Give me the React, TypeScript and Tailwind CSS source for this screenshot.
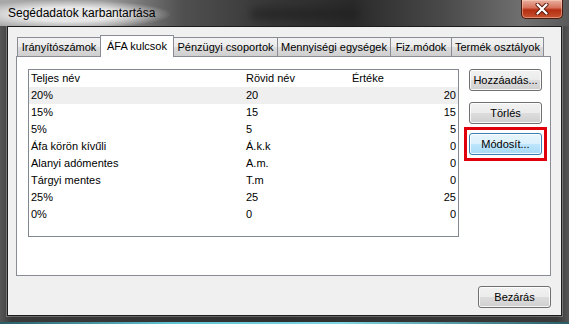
import type { ReactNode } from 'react'

const tabs = [
  { label: 'Irányítószámok', w: 'w-[84px]' },
  { label: 'ÁFA kulcsok', w: 'w-[74px]', active: true },
  { label: 'Pénzügyi csoportok', w: 'w-[105px]' },
  { label: 'Mennyiségi egységek', w: 'w-[114px]' },
  { label: 'Fiz.módok', w: 'w-[62px]' },
  { label: 'Termék osztályok', w: 'w-[93px]' },
]

const rows = [
  ['20%', '20', '20'],
  ['15%', '15', '15'],
  ['5%', '5', '5'],
  ['Áfa körön kívűli', 'Á.k.k', '0'],
  ['Alanyi adómentes', 'A.m.', '0'],
  ['Tárgyi mentes', 'T.m', '0'],
  ['25%', '25', '25'],
  ['0%', '0', '0'],
]

function Btn({ children, hot, className = '' }: { children: ReactNode; hot?: boolean; className?: string }) {
  return (
    <div
      className={`flex h-[22px] items-center justify-center rounded-[3px] border text-[11px] text-black shadow-[inset_0_0_0_1px_rgba(255,255,255,0.8)] ${
        hot
          ? 'border-[#3c7fb1] bg-[linear-gradient(#eaf6fd_0%,#d9f0fc_50%,#bee6fd_50%,#a7d9f5_100%)]'
          : 'border-[#707070] bg-[linear-gradient(#f2f2f2_0%,#ebebeb_50%,#dddddd_50%,#cfcfcf_100%)]'
      } ${className}`}
    >
      {children}
    </div>
  )
}

export default function App() {
  return (
    <div className="flex h-[324px] w-[569px] flex-col overflow-hidden bg-[linear-gradient(90deg,#565656_0%,#3a3a3a_2%,#2f2f2f_50%,#3a3a3a_98%,#555_100%)] font-['Liberation_Sans',Arial,sans-serif]">
      {/* Title bar */}
      <div className="relative flex h-[26px] shrink-0 items-center bg-[linear-gradient(90deg,#a8a8a8_0%,#9c9c9c_18%,#505050_32%,#363636_48%,#2a2a2a_62%,#4a4a4a_78%,#707070_92%,#5a5a5a_100%)] pl-[8px]">
        <div className="absolute left-0 top-0 h-[26px] w-[170px] bg-[radial-gradient(ellipse_at_40%_55%,rgba(235,235,235,0.95)_35%,rgba(200,200,200,0)_72%)]" />
        <div className="absolute left-[250px] top-[8px] h-[12px] w-[110px] rounded-full bg-[#1e1e1e] opacity-60 blur-[4px]" />
        <span className="relative text-[12px] text-black">Segédadatok karbantartása</span>
        <div className="absolute right-[6px] top-0 flex h-[19px] w-[42px] items-center justify-center rounded-b-[5px] border border-t-0 border-[#4a1a10] bg-[linear-gradient(#eab0a0_0%,#d7735c_42%,#b52e12_55%,#c8522f_100%)] shadow-[inset_0_0_0_1px_rgba(255,220,200,0.45)]">
          <svg width="14" height="12" viewBox="0 0 14 12">
            <path d="M2.5 1.5 L11.5 10.5 M11.5 1.5 L2.5 10.5" stroke="#5a1a0c" strokeWidth="4" strokeLinecap="round" />
            <path d="M2.5 1.5 L11.5 10.5 M11.5 1.5 L2.5 10.5" stroke="#fff" strokeWidth="2.2" strokeLinecap="round" />
          </svg>
        </div>
      </div>

      {/* Client area */}
      <div className="mx-[7px] mb-[6px] flex flex-1 flex-col border border-[#1c1c1c] bg-[#f0f0f0] pl-[8px] pr-[10px] pt-[8px] shadow-[0_0_0_1px_rgba(255,255,255,0.25)]">
        {/* Tabs */}
        <div className="flex h-[21px] items-end pl-[1px]">
          {tabs.map((t, i) =>
            t.active ? (
              <div
                key={t.label}
                className={`relative z-10 -mb-px ${i > 0 ? '-ml-px' : ''} flex h-[22px] ${t.w} items-start justify-center border border-b-0 border-[#898c95] bg-white pt-[2px] text-[11px] text-black`}
              >
                {t.label}
              </div>
            ) : (
              <div
                key={t.label}
                className={`${i > 0 ? '-ml-px' : ''} flex h-[19px] ${t.w} items-center justify-center border border-b-0 border-[#898c95] bg-[linear-gradient(#f2f2f2_0%,#ebebeb_50%,#dddddd_50%,#cfcfcf_100%)] text-[11px] text-black`}
              >
                {t.label}
              </div>
            ),
          )}
        </div>

        {/* Panel */}
        <div className="flex h-[220px] border border-[#898c95] bg-white pl-[11px] pr-[7px] pt-[12px]">
          <div className="h-[168px] w-[431px] border border-[#828790] bg-white text-[11px] text-black">
            <div className="flex h-[17px] items-center">
              <div className="w-[215px] pl-[2px]">Teljes név</div>
              <div className="w-[106px] pl-[2px]">Rövid név</div>
              <div className="pl-[2px]">Értéke</div>
            </div>
            {rows.map((r, i) => (
              <div key={i} className={`flex h-[17px] items-center ${i === 0 ? 'bg-[#efefef]' : ''}`}>
                <div className="w-[215px] pl-[2px]">{r[0]}</div>
                <div className="w-[106px] pl-[2px]">{r[1]}</div>
                <div className="flex-1 pr-[2px] text-right">{r[2]}</div>
              </div>
            ))}
          </div>

          <div className="ml-[10px] flex w-[73px] flex-col">
            <Btn>Hozzáadás...</Btn>
            <Btn className="mt-[11px]">Törlés</Btn>
            <div className="relative mt-[9px]">
              <Btn hot>Módosít...</Btn>
              <div className="absolute -bottom-[6px] -left-[5px] -right-[5px] -top-[6px] border-[3px] border-[#e0000b]" />
            </div>
          </div>
        </div>

        <div className="mt-[10px] flex justify-end">
          <Btn className="w-[73px]">Bezárás</Btn>
        </div>
      </div>
      <div className="h-[2px] bg-[linear-gradient(90deg,#2a5d66,#5fc3d3_30%,#7fd6e2_60%,#2a5d66)]" />
    </div>
  )
}
